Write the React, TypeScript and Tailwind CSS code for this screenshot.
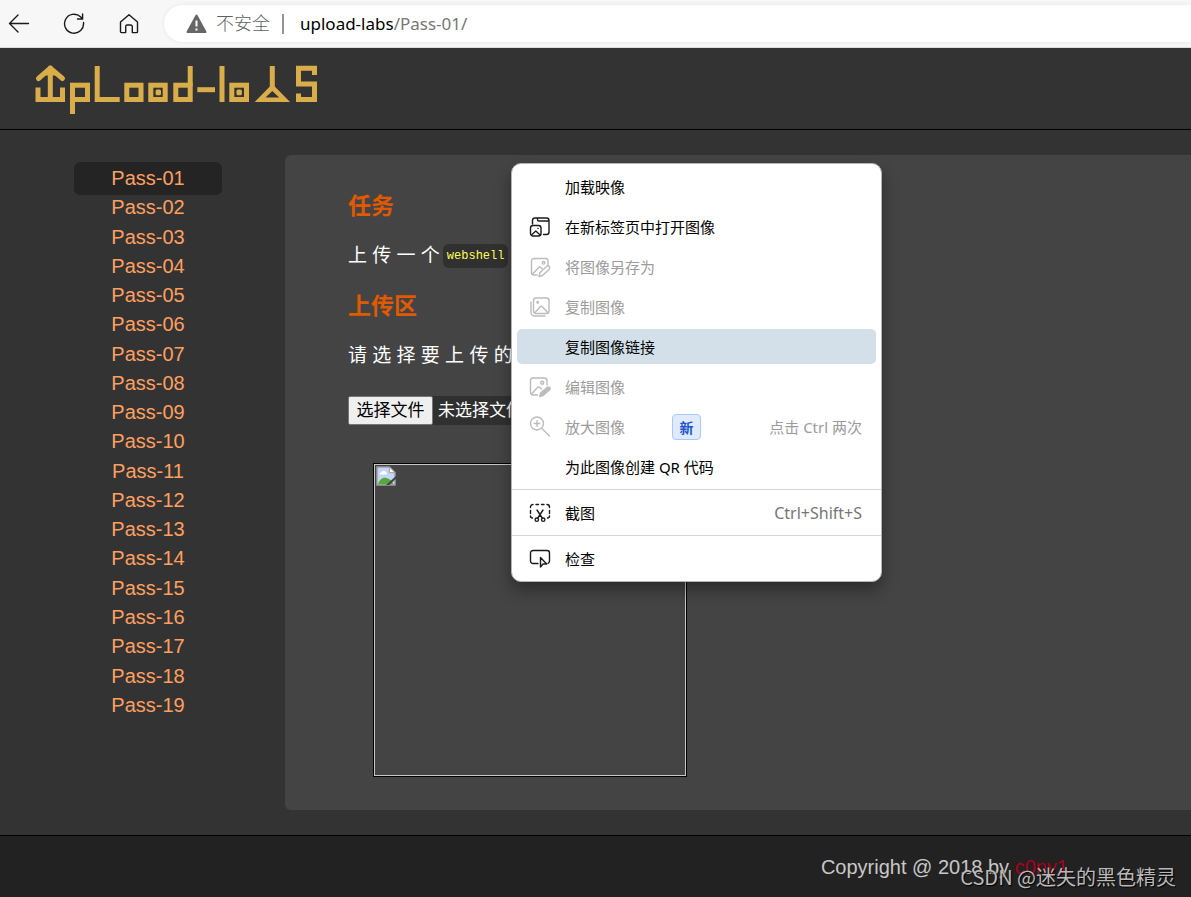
import type { ReactNode } from 'react';

const UI_FONT = "font-['Noto_Sans','Noto_Sans_CJK_SC',sans-serif]";

const passes = Array.from({ length: 19 }, (_, i) => `Pass-${String(i + 1).padStart(2, '0')}`);

function BrowserBar() {
  return (
    <div className={`flex h-12 items-center border-b border-[#dcdcdc] bg-[#f7f7f7] pl-2 ${UI_FONT}`}>
      <div className="flex shrink-0 gap-[33px] text-[#1a1a1a]">
        <button type="button" aria-label="返回">
          <svg width="22" height="22" viewBox="0 0 22 22" fill="none" stroke="currentColor" strokeWidth="1.4" strokeLinecap="round" strokeLinejoin="round">
            <path d="M20.5 10.5H1.5M10 2 1.5 10.5 10 19" />
          </svg>
        </button>
        <button type="button" aria-label="刷新">
          <svg width="22" height="22" viewBox="0 0 22 22" fill="none" stroke="currentColor" strokeWidth="1.4" strokeLinecap="round" strokeLinejoin="round">
            <path d="M20.5 9.5A9.5 9.5 0 1 1 17.5 3.7L19.3 5.6M19.6 1V6H14.5" />
          </svg>
        </button>
        <button type="button" aria-label="主页">
          <svg width="22" height="22" viewBox="0 0 22 22" fill="none" stroke="currentColor" strokeWidth="1.4" strokeLinejoin="round">
            <path d="M2.5 9 11 1.8 19.500 9V18.700a.9.9 0 0 1-.9.9H14.300V13.500A1.500 1.500 0 0 0 12.800 12H9.200A1.500 1.500 0 0 0 7.700 13.500v6.100H3.400a.9.9 0 0 1-.9-.9Z" />
          </svg>
        </button>
      </div>
      <div className="ml-6 flex h-[37px] min-w-0 flex-1 items-center rounded-l-full bg-white pl-[22px] shadow-[0_0_4px_rgba(0,0,0,0.08)]">
        <svg width="21" height="20" viewBox="0 0 21 20" aria-hidden="true">
          <path d="M10.5 1.5 19.5 18H1.5Z" fill="#666" stroke="#666" strokeWidth="2" strokeLinejoin="round" />
          <path d="M10.5 6.5v6M10.5 14.500v2" stroke="#fff" strokeWidth="2" />
        </svg>
        <span className="ml-[9px] text-[18px] font-light text-[#5f5f5f]">不安全</span>
        <span className="ml-3 h-5 w-0.5 bg-[#949494]" />
        <span className="ml-4 text-[17px] text-[#767676]">
          <span className="text-black">upload-labs</span>/Pass-01/
        </span>
      </div>
    </div>
  );
}

function Logo() {
  return (
    <svg width="286" height="54" viewBox="34 62 286 54" role="img" aria-label="UpLoad-labs" fill="none" stroke="#d9ae4a" strokeWidth="5" strokeLinecap="round" strokeLinejoin="round">
      <polyline points="38.5,78.5 50.3,68.2 62.5,78.5" />
      <polygon points="44,75.5 50.3,68 57,75.5" fill="#d9ae4a" stroke="none" />
      <line x1="50.3" y1="68" x2="50.3" y2="99" />
      <g strokeLinecap="butt" strokeLinejoin="miter">
        <polyline points="38,87.5 38,99.5 62.5,99.5 62.5,87.5" />
        <rect x="72.5" y="85.2" width="15" height="14.3" />
        <polyline points="72.5,99 72.5,114" />
        <polyline points="97.2,66 97.2,99.5 119.7,99.5" />
        <rect x="126.8" y="85.2" width="14.2" height="14.3" />
        <rect x="150.8" y="85.2" width="14.4" height="14.3" />
        <rect x="175.8" y="85.2" width="14.4" height="14.3" />
        <line x1="190.2" y1="66" x2="190.2" y2="86" />
        <line x1="197.3" y1="89.7" x2="215" y2="89.7" />
        <line x1="222" y1="66" x2="222" y2="102" />
        <rect x="231.8" y="85.2" width="14.7" height="14.3" />
        <line x1="272.3" y1="66" x2="272.3" y2="87" />
        <polyline points="314.5,75 314.5,68.2 298.5,68.2 298.5,84 314.5,84 314.5,99.5 298.5,99.5 298.5,93.5" />
      </g>
      <rect x="155.6" y="89.6" width="5.4" height="5.6" rx="1.5" fill="#d9ae4a" stroke="none" />
      <rect x="236.5" y="89.600" width="5.4" height="5.6" rx="1.5" fill="#d9ae4a" stroke="none" />
      <path d="M272.3 84 290 102H254.700ZM272.3 91 265.500 97.600H279.200Z" fill="#d9ae4a" fillRule="evenodd" stroke="none" />
    </svg>
  );
}

function MenuIcon({ children }: { children?: ReactNode }) {
  return (
    <svg width="22" height="22" viewBox="0 0 22 22" fill="none" stroke="currentColor" strokeWidth="1.4" strokeLinecap="round" strokeLinejoin="round" className="shrink-0" aria-hidden="true">
      {children}
    </svg>
  );
}

type Item = {
  label: string;
  icon?: ReactNode;
  disabled?: boolean;
  active?: boolean;
  badge?: string;
  hint?: string;
};

const groups: Item[][] = [
  [
    { label: '加载映像' },
    {
      label: '在新标签页中打开图像',
      icon: (
        <>
          <path d="M3.5 8V4.5A2.5 2.5 0 0 1 6 2H17.5A2.5 2.5 0 0 1 20 4.5V16A2.5 2.5 0 0 1 17.5 18.5H14.5M8.5 2v1.5A1.5 1.5 0 0 0 10 5h10" />
          <rect x="1.5" y="9.5" width="10.5" height="10.5" rx="2.5" />
          <path d="m3 18.5 3.8-3.5 3.8 3.5M9 12.4h.1" />
        </>
      ),
    },
    {
      label: '将图像另存为',
      disabled: true,
      icon: (
        <>
          <path d="M8 19H5a2.5 2.5 0 0 1-2.5-2.5V5A2.5 2.5 0 0 1 5 2.5H16.5A2.5 2.5 0 0 1 19 5v4M3.5 18l6.3-6.5a1.5 1.5 0 0 1 2.2 0l1.2 1.2" />
          <circle cx="14.5" cy="6.8" r="1.3" />
          <path d="m11 16.5 6.5-6a1.9 1.9 0 0 1 2.7 2.7L13.5 19.5 10 20.5Z" />
        </>
      ),
    },
    {
      label: '复制图像',
      disabled: true,
      icon: (
        <>
          <rect x="4.5" y="2" width="15.5" height="15.5" rx="2.5" />
          <path d="M2 6v10.5A3.5 3.5 0 0 0 5.5 20H16M6 16.5l5.2-5.8a1.5 1.5 0 0 1 2.2 0l5.2 5.8" />
          <circle cx="8.7" cy="6.3" r=".8" />
        </>
      ),
    },
    { label: '复制图像链接', active: true },
    {
      label: '编辑图像',
      disabled: true,
      icon: (
        <>
          <path d="M8.5 19H4a2.5 2.5 0 0 1-2.5-2.5V4.5A2.5 2.5 0 0 1 4 2H15.5A2.5 2.5 0 0 1 18 4.5V9M2.5 18l6-6.5a1.5 1.5 0 0 1 2.2 0l1.8 1.5" />
          <circle cx="13.2" cy="6.7" r="1.5" />
          <path d="m11.5 17 6.5-5.5a1.7 1.7 0 0 1 2.5 2.5L14 19.5l-3.2 1Z" fill="currentColor" />
        </>
      ),
    },
    {
      label: '放大图像',
      disabled: true,
      badge: '新',
      hint: '点击 Ctrl 两次',
      icon: (
        <>
          <circle cx="8" cy="7.5" r="6.5" />
          <path d="m13 12.5 7.5 7.5M8 4.7v5.6M5.2 7.5h5.6" />
        </>
      ),
    },
    { label: '为此图像创建 QR 代码' },
  ],
  [
    {
      label: '截图',
      hint: 'Ctrl+Shift+S',
      icon: (
        <>
          <path d="M1.5 5.5V5A2.5 2.5 0 0 1 4 2.5M7 2.5h2.5M12.5 2.5H15M18 2.5A2.5 2.5 0 0 1 20.5 5v.5M20.5 8.5v3M1.5 8.5v3M1.5 14a2 2 0 0 0 2 2M20.5 14a2 2 0 0 1-2 2" />
          <path d="m8 8 5.2 8M14 8 8.8 16" />
          <circle cx="7.8" cy="17.7" r="1.7" />
          <circle cx="14.2" cy="17.7" r="1.7" />
        </>
      ),
    },
  ],
  [
    {
      label: '检查',
      icon: (
        <>
          <path d="M9 15.5H4A2.5 2.5 0 0 1 1.5 13V5A2.5 2.5 0 0 1 4 2.5H18A2.5 2.5 0 0 1 20.5 5v8a2.5 2.5 0 0 1-1.5 2.300" />
          <path d="M11.5 9.5V19l2.500-3h3.700Z" />
        </>
      ),
    },
  ],
];

function MenuRow({ item }: { item: Item }) {
  return (
    <button
      type="button"
      role="menuitem"
      disabled={item.disabled}
      className={`flex h-[35px] w-full items-center rounded-[5px] pt-px pr-[14px] pl-3 text-left ${item.active ? 'bg-[#d3e0ea]' : ''}`}
    >
      <span className={item.disabled ? 'text-[#bcbcbc]' : 'text-[#1b1b1b]'}>
        <MenuIcon>{item.icon}</MenuIcon>
      </span>
      <span className={`ml-[14px] ${item.disabled ? 'text-[#9b9b9b]' : 'text-black'}`}>{item.label}</span>
      {item.badge && (
        <span className="ml-[47px] flex h-[26px] w-[29px] items-center justify-center rounded border border-[#a8c7fa] bg-[#dfebfd] text-[14px] font-bold text-[#1d56c9]">
          {item.badge}
        </span>
      )}
      {item.hint && <span className={`ml-auto ${item.disabled ? 'text-[#9b9b9b]' : 'text-[16px] text-[#767676]'}`}>{item.hint}</span>}
    </button>
  );
}

function ContextMenu() {
  return (
    <div
      role="menu"
      className={`absolute top-[163px] left-[511px] w-[371px] rounded-[10px] border border-[#b4b4b4] bg-white text-[15px] shadow-[0_8px_16px_rgba(0,0,0,0.35)] ${UI_FONT}`}
    >
      {groups.map((group, i) => (
        <div key={i} className={`px-[5px] ${i === 0 ? 'flex flex-col gap-[5px] py-[5px]' : 'border-t border-[#d6d6d6] pt-[5px] pb-[5px]'}`}>
          {group.map((item) => (
            <MenuRow key={item.label} item={item} />
          ))}
        </div>
      ))}
    </div>
  );
}

function BrokenImage() {
  return (
    <div className="mt-[38px] ml-[25px] h-[314px] w-[314px] border border-black">
      <div className="h-full border border-[#c8c8c8] p-px">
        <svg width="20" height="20" viewBox="0 0 21 21" aria-hidden="true">
          <path d="M1 1H14L20 7V20H1Z" fill="#c4d5f5" />
          <path d="M4 8.5a2 2 0 0 1 2-2 2.5 2.5 0 0 1 4.500 0 1.500 1.500 0 0 1 .5 2.500H5Z" fill="#fff" />
          <path d="M2 19.5c1.500-5 4.500-7.500 8.500-7 4 .5 6.500 3.500 8 7Z" fill="#56a93c" />
          <path d="M1 1H14L20 7V20H1Z" fill="none" stroke="#9a9a9a" strokeWidth="1.5" />
          <path d="M14 1v6h6Z" fill="#fff" stroke="#9a9a9a" />
          <path d="M10.5 20 21 10.500v3L14 20Z" fill="#444" />
        </svg>
      </div>
    </div>
  );
}

function Sidebar() {
  return (
    <aside className="flex w-[285px] shrink-0 flex-col pt-[34px] pr-[63px] pb-[115px] pl-[74px]">
      <ul className="flex flex-1 flex-col justify-between text-center text-[20px] leading-[29px] text-[#ff9f5f]">
        {passes.map((name, i) => (
          <li key={name}>
            <a href={`#${name}`} className={`block ${i === 0 ? '-my-0.5 rounded-md bg-[#242424] py-0.5' : ''}`}>
              {name}
            </a>
          </li>
        ))}
      </ul>
    </aside>
  );
}

export default function App() {
  return (
    <div className="relative min-h-screen overflow-hidden bg-[#333] font-['Liberation_Sans','Noto_Sans_CJK_SC',sans-serif]">
      <BrowserBar />
      <header className="border-b border-black pt-3.5 pb-[13px] pl-[34px]">
        <Logo />
      </header>
      <div className="flex">
        <Sidebar />
        <main className="my-[25px] min-w-0 flex-1 rounded-l-md bg-[#444] pt-9 pb-[33px] pl-[63px] text-[19px] leading-[30px] text-white">
          <h2 className="text-[23px] font-bold text-[#e05a00]">任务</h2>
          <p className="mt-5 flex items-center gap-[3px]">
            <span>上 传 一 个</span>
            <code className="h-6 rounded-md bg-[#303030] px-1 font-['Liberation_Mono',monospace] text-[12px] leading-6 text-[#ffff55]">webshell</code>
          </p>
          <h2 className="mt-5 text-[23px] font-bold text-[#e05a00]">上传区</h2>
          <p className="mt-5">请 选 择 要 上 传 的</p>
          <div className="mt-[25px] flex h-[29px] w-[300px] items-center gap-[5px] bg-[#303030] text-[17px] leading-6">
            <button type="button" className="h-full w-[85px] rounded-xs border border-[#767676] bg-[#efefef] text-black">
              选择文件
            </button>
            <span>未选择文件</span>
          </div>
          <BrokenImage />
        </main>
      </div>
      <footer className="border-t border-black bg-[#222] pt-4 pr-[123px] pb-[15px] text-right text-[20px] leading-[30px] text-[#c8c8c8]">
        Copyright @ 2018 by{' '}
        <a href="#c0ny1" className="text-[#a8001e]">
          c0ny1
        </a>
      </footer>
      <span className="absolute right-[15px] bottom-[5px] font-['Noto_Sans_CJK_SC',sans-serif] text-[20px] leading-[30px] text-[#b9b9b9] [text-shadow:1px_1px_1px_#000]">
        CSDN @迷失的黑色精灵
      </span>
      <ContextMenu />
    </div>
  );
}
